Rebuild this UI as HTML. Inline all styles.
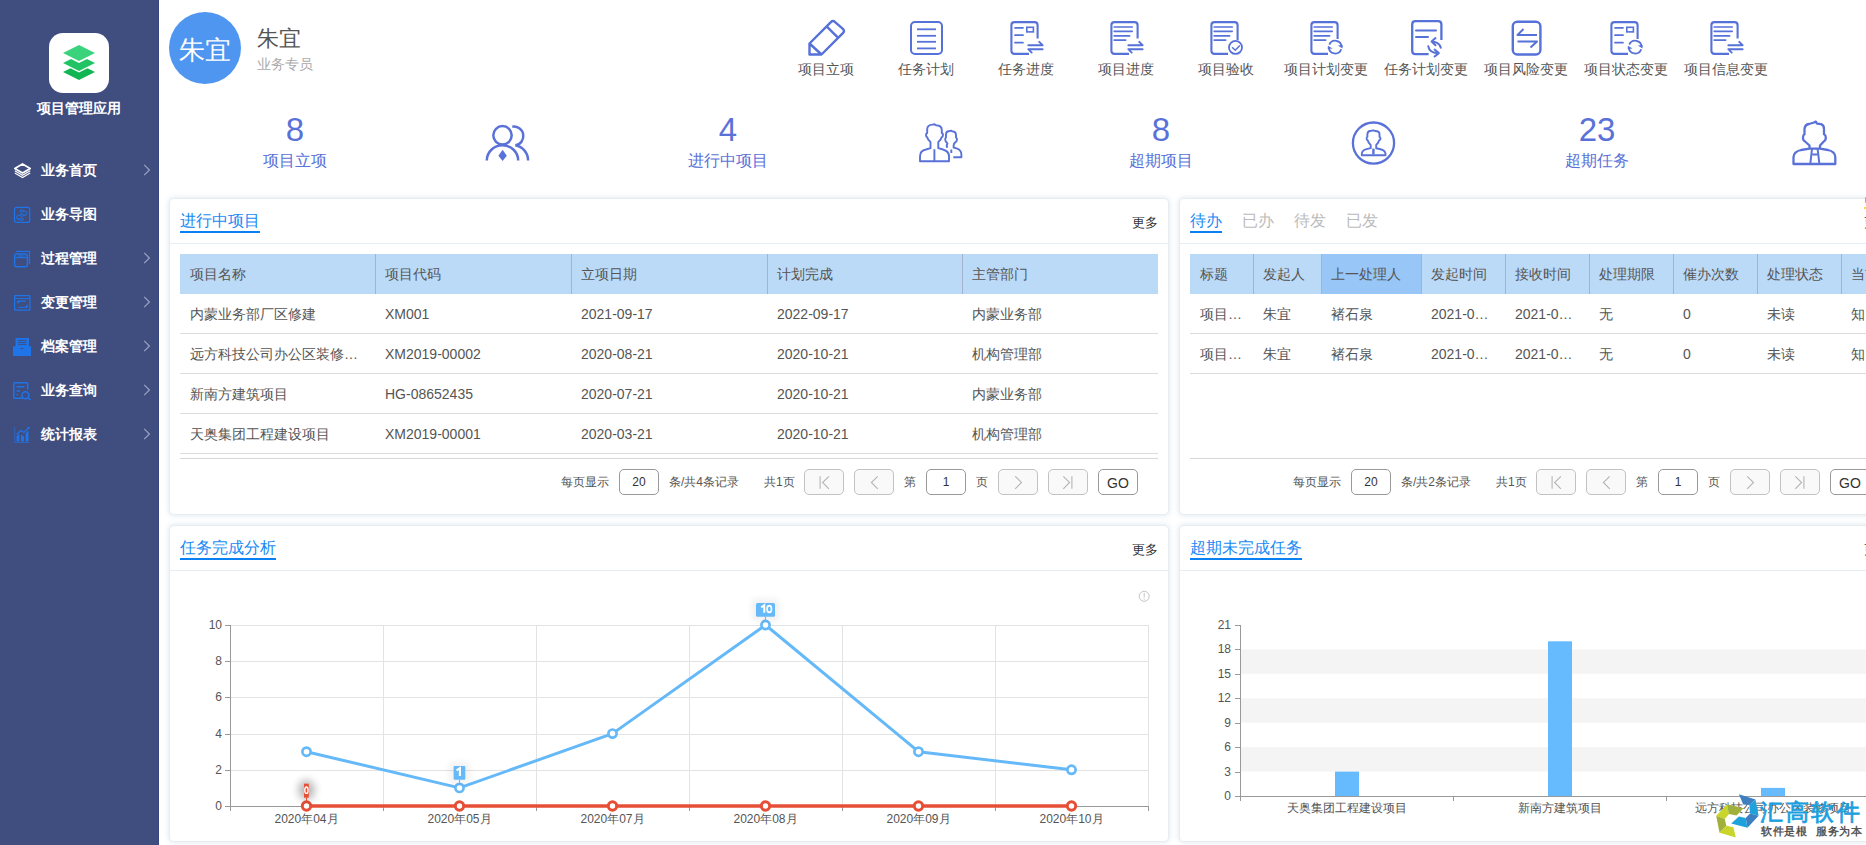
<!DOCTYPE html><html><head><meta charset="utf-8"><style>
*{box-sizing:border-box;margin:0;padding:0}
html,body{width:1866px;height:845px;overflow:hidden;background:#fff;font-family:"Liberation Sans", sans-serif;}
.abs{position:absolute}
.t{position:absolute;white-space:nowrap;line-height:1}
.side{position:absolute;left:0;top:0;width:159px;height:845px;background:#3f4d7f;border-right:1px solid #374681}
.mi{position:absolute;left:0;width:159px;height:44px}
.mi .lb{position:absolute;left:41px;top:15px;font-size:14px;color:#fff;line-height:14px;font-weight:bold}
.mi svg.ic{position:absolute;left:13px;top:13px}
.mi .ch{position:absolute;left:143px;top:16px}
.tool{position:absolute;top:0;width:100px;height:90px}
.tool svg{position:absolute;left:0;top:0}
.tool .lb{position:absolute;top:62px;left:0;width:100px;text-align:center;font-size:14px;color:#555;line-height:14px}
.panel{position:absolute;background:#fff;border-radius:4px;box-shadow:0 0 0 1px #e6edf1,0 0 5px 2px rgba(160,190,205,.28);overflow:hidden}
.ph{position:absolute;left:0;top:0;right:0;height:44px;border-bottom:1px solid #e6eef5}
.ptitle{position:absolute;left:10px;top:13px;font-size:16px;line-height:16px;color:#1e8cf0;padding-bottom:7px;border-bottom:2px solid #0a7cf0}
.more{position:absolute;right:10px;top:16px;font-size:13px;line-height:13px;color:#333}
table{border-collapse:collapse;table-layout:fixed}
th{background:#bbdaf8;height:40px;font-weight:normal;text-align:left;padding-left:10px;font-size:14px;color:#555;border-left:1px solid #9fb0cc;white-space:nowrap;overflow:hidden}
th:first-child{border-left:none}
td{height:40px;text-align:left;padding-left:10px;font-size:14px;color:#555;border-bottom:1px solid #dcdcdc;white-space:nowrap;overflow:hidden;text-overflow:ellipsis}
.pg{position:absolute;top:458px;height:56px;border-top:1px solid #d8d8d8}
.pt{position:absolute;top:18px;font-size:12px;line-height:12px;color:#555;white-space:nowrap}
.pin{position:absolute;top:11px;width:40px;height:26px;border:1px solid #999;border-radius:5px;text-align:center;font-size:12px;line-height:24px;color:#333}
.pb{position:absolute;top:11px;width:40px;height:26px;border:1px solid #c8c8c8;border-radius:5px;background:#f7f7f7}
.pb svg{position:absolute;left:0;top:0}
</style></head><body>

<div class="side">
<div class="abs" style="left:49px;top:33px;width:60px;height:60px;background:#fff;border-radius:14px"></div>
<svg class="abs" style="left:49px;top:33px" width="60" height="60" viewBox="0 0 60 60">
<polygon points="30,47 46,39 30,31 14,39" fill="#12b553"/>
<polygon points="30,39.5 46,31.5 30,23.5 14,31.5" fill="#fff"/>
<polygon points="30,38 46,30 30,22 14,30" fill="#22c365"/>
<polygon points="30,30 46,22 30,14 14,22" fill="#fff"/>
<polygon points="30,28 46,20 30,12 14,20" fill="#3ad27b"/>
</svg>
<div class="t" style="left:37px;top:101px;font-size:14px;line-height:14px;color:#fff;font-weight:bold;width:84px;text-align:center">项目管理应用</div>

<div class="mi" style="top:148px"><svg class="ic" width="20" height="20" viewBox="0 0 20 20"><path d="M9.5 2.9 L17.2 7.5 L9.5 12.1 L1.8 7.5 Z" fill="none" stroke="#fff" stroke-width="1.7" stroke-linejoin="round"/><path d="M1.8 9.7 L9.5 14.3 L17.2 9.7 M1.8 11.9 L9.5 16.5 L17.2 11.9" fill="none" stroke="#fff" stroke-width="1.15"/></svg><div class="lb">业务首页</div><svg class="ch" width="8" height="13" viewBox="0 0 8 13"><path d="M1.2 0.8 L6.4 6 L1.2 11.2" fill="none" stroke="#9aa3c2" stroke-width="1.2"/></svg></div>
<div class="mi" style="top:192px"><svg class="ic" width="20" height="20" viewBox="0 0 20 20"><rect x="1.5" y="2.4" width="15.2" height="15" rx="2" fill="none" stroke="#1f74e8" stroke-width="1.3"/><rect x="7" y="5" width="3.6" height="2" rx="1" fill="none" stroke="#1f74e8" stroke-width="1"/><rect x="7" y="9.2" width="3.6" height="2" rx="1" fill="none" stroke="#1f74e8" stroke-width="1"/><rect x="7" y="13.3" width="3.6" height="2" rx="1" fill="none" stroke="#1f74e8" stroke-width="1"/><path d="M10.8 6 Q14 6 14 8.1 Q14 10.2 11.5 10.2 M6.6 10.2 Q3.6 10.2 3.6 12.25 Q3.6 14.3 6 14.3" fill="none" stroke="#1f74e8" stroke-width="1"/><path d="M10.6 10.2 L12.4 9 L12.4 11.4 Z M6.9 14.3 L5.1 13.1 L5.1 15.5 Z" fill="#1f74e8"/></svg><div class="lb">业务导图</div></div>
<div class="mi" style="top:236px"><svg class="ic" width="20" height="20" viewBox="0 0 20 20"><path d="M3.2 2.4 H16.5 V15.2" fill="none" stroke="#1f74e8" stroke-width="1.3"/><rect x="1.6" y="5" width="12.8" height="12.8" rx="2" fill="none" stroke="#1f74e8" stroke-width="1.4"/><path d="M1.6 8.6 H14.4" stroke="#1f74e8" stroke-width="1.2"/><path d="M5 7 H10.5 M11.6 7 H12.6" stroke="#1f74e8" stroke-width="1"/></svg><div class="lb">过程管理</div><svg class="ch" width="8" height="13" viewBox="0 0 8 13"><path d="M1.2 0.8 L6.4 6 L1.2 11.2" fill="none" stroke="#9aa3c2" stroke-width="1.2"/></svg></div>
<div class="mi" style="top:280px"><svg class="ic" width="20" height="20" viewBox="0 0 20 20"><rect x="1.6" y="2.7" width="15.3" height="14.5" rx="0.5" fill="none" stroke="#1f74e8" stroke-width="1.3"/><path d="M1.6 5.6 H16.9" stroke="#1f74e8" stroke-width="1"/><path d="M12.7 8.1 H5.2 M5.2 14.3 H14" fill="none" stroke="#1f74e8" stroke-width="1.1"/><path d="M3.6 8.1 H7.2 L5 11 Z M12 14.3 H15.6 L14 11.2 Z" fill="#1f74e8"/></svg><div class="lb">变更管理</div><svg class="ch" width="8" height="13" viewBox="0 0 8 13"><path d="M1.2 0.8 L6.4 6 L1.2 11.2" fill="none" stroke="#9aa3c2" stroke-width="1.2"/></svg></div>
<div class="mi" style="top:324px"><svg class="ic" width="20" height="20" viewBox="0 0 20 20"><rect x="2.5" y="1" width="13.5" height="10" fill="#1f74e8"/><path d="M5 3.4 H13.5 M5 5.4 H13.5 M5 7.4 H13.5" stroke="#3f4d7f" stroke-width="0.9"/><path d="M0 9.2 H5.2 L9 12.6 L12.8 9.2 H18 V18.9 H0 Z" fill="#1f74e8"/></svg><div class="lb">档案管理</div><svg class="ch" width="8" height="13" viewBox="0 0 8 13"><path d="M1.2 0.8 L6.4 6 L1.2 11.2" fill="none" stroke="#9aa3c2" stroke-width="1.2"/></svg></div>
<div class="mi" style="top:368px"><svg class="ic" width="20" height="20" viewBox="0 0 20 20"><path d="M9.5 17.2 H1.8 Q0.8 17.2 0.8 16.2 V2.7 Q0.8 1.7 1.8 1.7 H13.7 Q14.7 1.7 14.7 2.7 V8.5" fill="none" stroke="#1f74e8" stroke-width="1.5"/><path d="M3.5 5.7 H11.5 M3.5 9.9 H7 M3.5 13.5 H5" stroke="#1f74e8" stroke-width="1.5"/><circle cx="12.4" cy="14.2" r="3.5" fill="none" stroke="#1f74e8" stroke-width="1.5"/><path d="M14.9 16.7 L17.6 19.2" stroke="#1f74e8" stroke-width="1.6"/></svg><div class="lb">业务查询</div><svg class="ch" width="8" height="13" viewBox="0 0 8 13"><path d="M1.2 0.8 L6.4 6 L1.2 11.2" fill="none" stroke="#9aa3c2" stroke-width="1.2"/></svg></div>
<div class="mi" style="top:412px"><svg class="ic" width="20" height="20" viewBox="0 0 20 20"><path d="M1.8 2 V17.5 H16.5" fill="none" stroke="#1f74e8" stroke-width="0.8" opacity="0.8"/><path d="M3.5 16.5 V11 L6.5 9 V16.5 Z M8 16.5 V9.5 L11 11.5 V16.5 Z M12.5 16.5 V8.5 L15.5 5.5 V16.5 Z" fill="#1f74e8"/><path d="M3.5 9.5 L8 5.5 L11 7.5 L15.5 3" fill="none" stroke="#1f74e8" stroke-width="1.2"/><circle cx="15.7" cy="2.9" r="1.2" fill="#1f74e8"/></svg><div class="lb">统计报表</div><svg class="ch" width="8" height="13" viewBox="0 0 8 13"><path d="M1.2 0.8 L6.4 6 L1.2 11.2" fill="none" stroke="#9aa3c2" stroke-width="1.2"/></svg></div>
</div>
<div class="abs" style="left:169px;top:12px;width:72px;height:72px;border-radius:50%;background:#4f96f0"></div>
<div class="t" style="left:179px;top:37px;width:52px;text-align:center;font-size:26px;line-height:26px;color:#fff">朱宜</div>
<div class="t" style="left:257px;top:28px;font-size:22px;line-height:22px;color:#555">朱宜</div>
<div class="t" style="left:257px;top:57px;font-size:14px;line-height:14px;color:#aaa">业务专员</div>

<div class="tool" style="left:776px"><svg width="100" height="60" viewBox="0 0 100 60"><path d="M45.5 54.5 H33.5 V43.5 L54.9 22.1 Q57 20 59.1 22.1 L66.9 28.9 Q69 31 66.9 33.1 Z M50.6 26.4 L62.2 37.8 M33.5 43.5 L45.5 54.5" fill="none" stroke="#5671d8" stroke-width="2.4" stroke-linejoin="round"/></svg><div class="lb">项目立项</div></div>
<div class="tool" style="left:876px"><svg width="100" height="60" viewBox="0 0 100 60"><rect x="35" y="22" width="31" height="32" rx="4" fill="none" stroke="#5671d8" stroke-width="2"/><path d="M41 29.3 H60" stroke="#5671d8" stroke-width="1.8"/><path d="M41 35.8 H60" stroke="#5671d8" stroke-width="1.8"/><path d="M41 41.8 H60" stroke="#5671d8" stroke-width="1.8"/><path d="M41 48.4 H60" stroke="#5671d8" stroke-width="1.8"/></svg><div class="lb">任务计划</div></div>
<div class="tool" style="left:976px"><svg width="100" height="60" viewBox="0 0 100 60"><path d="M61.6 38.5 V25.2 Q61.6 22.1 58.5 22.1 H38.5 Q35.4 22.1 35.4 25.2 V50.8 Q35.4 53.9 38.5 53.9 H53.0" fill="none" stroke="#5671d8" stroke-width="2.1"/><path d="M39 27.8 H47" stroke="#5671d8" stroke-width="1.7" stroke-linecap="round"/><path d="M39 35.2 H47" stroke="#5671d8" stroke-width="1.7" stroke-linecap="round"/><path d="M39 42.7 H47" stroke="#5671d8" stroke-width="1.7" stroke-linecap="round"/><rect x="50.8" y="27.3" width="6.6" height="4.6" fill="none" stroke="#5671d8" stroke-width="1.6"/><path d="M52.3 45.2 H66.6 L63.2 41.8 M66.6 49.2 H52.3 L55.7 52.6" fill="none" stroke="#5671d8" stroke-width="1.9" stroke-linecap="round" stroke-linejoin="round"/></svg><div class="lb">任务进度</div></div>
<div class="tool" style="left:1076px"><svg width="100" height="60" viewBox="0 0 100 60"><path d="M61.6 38.5 V25.2 Q61.6 22.1 58.5 22.1 H38.5 Q35.4 22.1 35.4 25.2 V50.8 Q35.4 53.9 38.5 53.9 H53.0" fill="none" stroke="#5671d8" stroke-width="2.1"/><path d="M38.2 27.0 H56.2" stroke="#5671d8" stroke-width="1.7" stroke-linecap="round"/><path d="M38.2 31.3 H56.2" stroke="#5671d8" stroke-width="1.7" stroke-linecap="round"/><path d="M38.2 35.8 H53.6" stroke="#5671d8" stroke-width="1.7" stroke-linecap="round"/><path d="M38.2 40.1 H49.7" stroke="#5671d8" stroke-width="1.7" stroke-linecap="round"/><path d="M52.3 45.2 H66.6 L63.2 41.8 M66.6 49.2 H52.3 L55.7 52.6" fill="none" stroke="#5671d8" stroke-width="1.9" stroke-linecap="round" stroke-linejoin="round"/></svg><div class="lb">项目进度</div></div>
<div class="tool" style="left:1176px"><svg width="100" height="60" viewBox="0 0 100 60"><path d="M61.6 40.0 V25.2 Q61.6 22.1 58.5 22.1 H38.5 Q35.4 22.1 35.4 25.2 V50.8 Q35.4 53.9 38.5 53.9 H52.0" fill="none" stroke="#5671d8" stroke-width="2.1"/><path d="M38.2 27.0 H56.2" stroke="#5671d8" stroke-width="1.7" stroke-linecap="round"/><path d="M38.2 31.3 H56.2" stroke="#5671d8" stroke-width="1.7" stroke-linecap="round"/><path d="M38.2 35.8 H53.6" stroke="#5671d8" stroke-width="1.7" stroke-linecap="round"/><path d="M38.2 40.1 H49.7" stroke="#5671d8" stroke-width="1.7" stroke-linecap="round"/><circle cx="59.5" cy="47.4" r="6.5" fill="#fff" stroke="#5671d8" stroke-width="1.8"/><path d="M56.1 47.2 L59.3 50.2 L63.8 45.4" fill="none" stroke="#5671d8" stroke-width="1.5"/></svg><div class="lb">项目验收</div></div>
<div class="tool" style="left:1276px"><svg width="100" height="60" viewBox="0 0 100 60"><path d="M61.6 39.0 V25.2 Q61.6 22.1 58.5 22.1 H38.5 Q35.4 22.1 35.4 25.2 V50.8 Q35.4 53.9 38.5 53.9 H52.0" fill="none" stroke="#5671d8" stroke-width="2.1"/><path d="M38.2 27.0 H56.2" stroke="#5671d8" stroke-width="1.7" stroke-linecap="round"/><path d="M38.2 31.3 H56.2" stroke="#5671d8" stroke-width="1.7" stroke-linecap="round"/><path d="M38.2 35.8 H53.6" stroke="#5671d8" stroke-width="1.7" stroke-linecap="round"/><path d="M38.2 40.1 H49.7" stroke="#5671d8" stroke-width="1.7" stroke-linecap="round"/><path d="M53.31 44.60 A6.4 6.4 0 0 1 65.60 46.88 M65.21 49.29 A6.4 6.4 0 0 1 52.80 47.32" fill="none" stroke="#5671d8" stroke-width="1.8"/><polygon points="61.80,45.60 66.70,45.10 66.50,48.40" fill="#5671d8"/><polygon points="56.60,48.60 51.70,49.10 51.90,45.80" fill="#5671d8"/></svg><div class="lb">项目计划变更</div></div>
<div class="tool" style="left:1376px"><svg width="100" height="60" viewBox="0 0 100 60"><path d="M65.4 40 V24.5 Q65.4 21.2 62 21.2 H39.5 Q36.2 21.2 36.2 24.5 V50.8 Q36.2 54.2 39.5 54.2 H52.6" fill="none" stroke="#5671d8" stroke-width="2.3"/><path d="M40 30.4 H60 M40 36.9 H52" stroke="#5671d8" stroke-width="2" stroke-linecap="round"/><path d="M55.8 41.5 Q63.3 42 64.8 47.8 M52.3 46.3 Q53.3 53 62.8 53.1 M59.5 38.1 L55.6 41.6 L59.5 45.3 M58.6 49.6 L62.8 53.1 L58.6 56.5" fill="none" stroke="#5671d8" stroke-width="2" stroke-linejoin="round" stroke-linecap="round"/></svg><div class="lb">任务计划变更</div></div>
<div class="tool" style="left:1476px"><svg width="100" height="60" viewBox="0 0 100 60"><rect x="36.8" y="21.8" width="27.6" height="32.7" rx="4.5" fill="none" stroke="#5671d8" stroke-width="2.4"/><path d="M61 35 H41.5 L47.5 29 M41.5 41.4 H61 L54.5 47.5" fill="none" stroke="#5671d8" stroke-width="2" stroke-linejoin="round"/></svg><div class="lb">项目风险变更</div></div>
<div class="tool" style="left:1576px"><svg width="100" height="60" viewBox="0 0 100 60"><path d="M61.6 39.0 V25.2 Q61.6 22.1 58.5 22.1 H38.5 Q35.4 22.1 35.4 25.2 V50.8 Q35.4 53.9 38.5 53.9 H52.0" fill="none" stroke="#5671d8" stroke-width="2.1"/><path d="M39 27.8 H47" stroke="#5671d8" stroke-width="1.7" stroke-linecap="round"/><path d="M39 35.2 H47" stroke="#5671d8" stroke-width="1.7" stroke-linecap="round"/><path d="M39 42.7 H47" stroke="#5671d8" stroke-width="1.7" stroke-linecap="round"/><rect x="50.8" y="27.3" width="6.6" height="4.6" fill="none" stroke="#5671d8" stroke-width="1.6"/><path d="M53.31 44.60 A6.4 6.4 0 0 1 65.60 46.88 M65.21 49.29 A6.4 6.4 0 0 1 52.80 47.32" fill="none" stroke="#5671d8" stroke-width="1.8"/><polygon points="61.80,45.60 66.70,45.10 66.50,48.40" fill="#5671d8"/><polygon points="56.60,48.60 51.70,49.10 51.90,45.80" fill="#5671d8"/></svg><div class="lb">项目状态变更</div></div>
<div class="tool" style="left:1676px"><svg width="100" height="60" viewBox="0 0 100 60"><path d="M61.6 38.5 V25.2 Q61.6 22.1 58.5 22.1 H38.5 Q35.4 22.1 35.4 25.2 V50.8 Q35.4 53.9 38.5 53.9 H53.0" fill="none" stroke="#5671d8" stroke-width="2.1"/><path d="M38.2 27.0 H56.2" stroke="#5671d8" stroke-width="1.7" stroke-linecap="round"/><path d="M38.2 31.3 H56.2" stroke="#5671d8" stroke-width="1.7" stroke-linecap="round"/><path d="M38.2 35.8 H53.6" stroke="#5671d8" stroke-width="1.7" stroke-linecap="round"/><path d="M38.2 40.1 H49.7" stroke="#5671d8" stroke-width="1.7" stroke-linecap="round"/><path d="M52.3 45.2 H66.6 L63.2 41.8 M66.6 49.2 H52.3 L55.7 52.6" fill="none" stroke="#5671d8" stroke-width="1.9" stroke-linecap="round" stroke-linejoin="round"/></svg><div class="lb">项目信息变更</div></div>
<div class="t" style="left:235px;top:113px;width:120px;text-align:center;font-size:33px;line-height:33px;color:#5a72d8">8</div>
<div class="t" style="left:225px;top:153px;width:140px;text-align:center;font-size:16px;line-height:16px;color:#5a72d8">项目立项</div>
<div class="t" style="left:668px;top:113px;width:120px;text-align:center;font-size:33px;line-height:33px;color:#5a72d8">4</div>
<div class="t" style="left:658px;top:153px;width:140px;text-align:center;font-size:16px;line-height:16px;color:#5a72d8">进行中项目</div>
<div class="t" style="left:1101px;top:113px;width:120px;text-align:center;font-size:33px;line-height:33px;color:#5a72d8">8</div>
<div class="t" style="left:1091px;top:153px;width:140px;text-align:center;font-size:16px;line-height:16px;color:#5a72d8">超期项目</div>
<div class="t" style="left:1537px;top:113px;width:120px;text-align:center;font-size:33px;line-height:33px;color:#5a72d8">23</div>
<div class="t" style="left:1527px;top:153px;width:140px;text-align:center;font-size:16px;line-height:16px;color:#5a72d8">超期任务</div>
<svg class="abs" style="left:480px;top:118px" width="56" height="48" viewBox="480 118 56 48">
<circle cx="502.5" cy="135.3" r="9.2" fill="none" stroke="#5a72d8" stroke-width="2.5"/>
<path d="M486.8 160.5 A15.7 15.2 0 0 1 518.2 160.5" fill="none" stroke="#5a72d8" stroke-width="2.5"/>
<path d="M502.6 149.8 L506.8 155.8 L502.6 160.9 L498.4 155.8 Z" fill="#5a72d8"/>
<path d="M512.3 126.7 A9.4 9.4 0 0 1 515.5 145.3" fill="none" stroke="#5a72d8" stroke-width="2.5"/>
<path d="M515.5 145.3 A15.5 15.5 0 0 1 528.1 160.5" fill="none" stroke="#5a72d8" stroke-width="2.5"/>
</svg>
<svg class="abs" style="left:914px;top:118px" width="54" height="48" viewBox="914 118 54 48">
<path d="M920 161.2 V156.5 Q920 150.5 926 149.5 L930.5 148.2 V142 Q927.8 140 927.3 137.5 Q926 137 926 135 Q926 133.5 927.2 133 V129 Q927.5 124.8 932.5 124.6 L934.5 124.2 L936 125.2 Q941.8 125.5 941.8 130 V133 Q943 133.5 943 135 Q943 137 941.5 137.5 Q941 140 938.3 142 V148.2 L943 149.5 Q949 151 949 156.5 V161.2 Z M934.4 149.2 V161" fill="none" stroke="#5a72d8" stroke-width="1.9" stroke-linejoin="round"/>
<path d="M947.4 147.8 Q946 145.5 947.5 143.5 Q945.2 141.5 945.2 139.5 Q945.2 138 946 137.5 V134.5 Q946 131 950 131 L951 130.6 L952 131.2 Q956 131.5 956 135 V137.5 Q957 138 957 139.5 Q957 141.5 955 142.5 Q953.6 144 953.6 145.5 V147.5 L956.5 148.3 Q961.4 149.8 961.4 154.5 V157.3 H953.3 M951.3 149.5 V153" fill="none" stroke="#5a72d8" stroke-width="1.9" stroke-linejoin="round"/>
</svg>
<svg class="abs" style="left:1348px;top:118px" width="52" height="50" viewBox="1348 118 52 50">
<circle cx="1373.5" cy="143.1" r="20.6" fill="none" stroke="#5a72d8" stroke-width="2.3"/>
<path d="M1361.8 155.3 V153.5 Q1362.5 150.2 1366.5 149.2 L1370.7 148.2 V145 Q1368.3 143 1367.8 140.5 Q1366.6 140 1366.6 138.5 Q1366.6 137.3 1367.4 136.8 V134 Q1367.5 131 1371 130.8 L1373.8 130.4 L1375 131 Q1379.5 131.2 1379.5 134 V136.8 Q1380.5 137.3 1380.5 138.5 Q1380.5 140 1379 140.5 Q1378.5 143 1376.2 145 V148.2 L1380.5 149.2 Q1384.8 150.2 1385.5 153.5 V155.3 Z" fill="none" stroke="#5a72d8" stroke-width="1.9" stroke-linejoin="round"/>
<path d="M1373.4 148.6 V154.5" stroke="#5a72d8" stroke-width="2.4"/>
</svg>
<svg class="abs" style="left:1788px;top:116px" width="54" height="52" viewBox="1788 116 54 52">
<path d="M1793.5 164 V157 Q1794 151.5 1801 150 L1809.5 148.6 V145.5 L1804.5 141 Q1803 140.5 1803 137.5 Q1803 135 1804.5 134.3 V129 Q1805 124.5 1809 124 L1814 122.5 L1815.8 121.6 L1817 123.6 L1821 124.2 Q1824 125 1824 129 V134.3 Q1825.8 135 1825.8 137.5 Q1825.8 140.5 1824 141.2 L1820 145.5 V148.6 L1828 150 Q1835 151.5 1835.3 157 V164 Z M1809.5 148.6 H1820" fill="none" stroke="#5a72d8" stroke-width="2.3" stroke-linejoin="round"/>
<path d="M1812 148.8 L1810.3 164 M1817.6 148.8 L1819.4 164 M1812.5 154.5 H1817.2" fill="none" stroke="#5a72d8" stroke-width="2" stroke-linejoin="round"/>
</svg>
<div class="panel" style="left:170px;top:199px;width:998px;height:315px"></div>
<div class="panel" style="left:1180px;top:199px;width:720px;height:315px"></div>
<div class="panel" style="left:170px;top:526px;width:998px;height:315px"></div>
<div class="panel" style="left:1180px;top:526px;width:720px;height:315px"></div>
<div class="abs" style="left:170px;top:243px;width:998px;height:1px;background:#e6eef5"></div>
<div class="abs" style="left:1180px;top:243px;width:720px;height:1px;background:#e6eef5"></div>
<div class="abs" style="left:170px;top:570px;width:998px;height:1px;background:#e6eef5"></div>
<div class="abs" style="left:1180px;top:570px;width:720px;height:1px;background:#e6eef5"></div>
<div class="t" style="left:180px;top:213px;font-size:16px;line-height:16px;color:#1a8af5;padding-bottom:0">进行中项目</div>
<div class="abs" style="left:180px;top:231px;width:80px;height:2px;background:#0a80f5"></div>
<div class="t" style="left:1132px;top:216px;font-size:13px;line-height:13px;color:#333">更多</div>
<div class="t" style="left:1190px;top:213px;font-size:16px;line-height:16px;color:#1a8af5;padding-bottom:0">待办</div>
<div class="abs" style="left:1190px;top:231px;width:32px;height:2px;background:#0a80f5"></div>
<div class="t" style="left:1242px;top:213px;font-size:16px;line-height:16px;color:#bbb">已办</div>
<div class="t" style="left:1294px;top:213px;font-size:16px;line-height:16px;color:#bbb">待发</div>
<div class="t" style="left:1346px;top:213px;font-size:16px;line-height:16px;color:#bbb">已发</div>
<div class="t" style="left:1864px;top:216px;font-size:13px;line-height:13px;color:#333">更多</div>
<div class="abs" style="left:1865px;top:197px;width:2px;height:6px;background:#3ddbb5;border-radius:1px"></div>
<div class="abs" style="left:1864px;top:207px;width:3px;height:2px;background:#ffd83a"></div>
<div class="t" style="left:180px;top:540px;font-size:16px;line-height:16px;color:#1a8af5;padding-bottom:0">任务完成分析</div>
<div class="abs" style="left:180px;top:558px;width:96px;height:2px;background:#0a80f5"></div>
<div class="t" style="left:1132px;top:543px;font-size:13px;line-height:13px;color:#333">更多</div>
<div class="t" style="left:1190px;top:540px;font-size:16px;line-height:16px;color:#1a8af5;padding-bottom:0">超期未完成任务</div>
<div class="abs" style="left:1190px;top:558px;width:112px;height:2px;background:#0a80f5"></div>
<div class="t" style="left:1864px;top:543px;font-size:13px;line-height:13px;color:#333">更多</div>
<div class="abs" style="left:180px;top:254px;width:978px;height:40px;background:#bbdaf8"></div>
<div class="abs" style="left:375px;top:254px;width:1px;height:40px;background:#a3b3cf"></div>
<div class="abs" style="left:571px;top:254px;width:1px;height:40px;background:#a3b3cf"></div>
<div class="abs" style="left:767px;top:254px;width:1px;height:40px;background:#a3b3cf"></div>
<div class="abs" style="left:962px;top:254px;width:1px;height:40px;background:#a3b3cf"></div>
<div class="t" style="left:190px;top:267px;font-size:14px;line-height:14px;color:#555">项目名称</div>
<div class="t" style="left:385px;top:267px;font-size:14px;line-height:14px;color:#555">项目代码</div>
<div class="t" style="left:581px;top:267px;font-size:14px;line-height:14px;color:#555">立项日期</div>
<div class="t" style="left:777px;top:267px;font-size:14px;line-height:14px;color:#555">计划完成</div>
<div class="t" style="left:972px;top:267px;font-size:14px;line-height:14px;color:#555">主管部门</div>
<div class="abs" style="left:180px;top:333px;width:978px;height:1px;background:#dcdcdc"></div>
<div class="t" style="left:190px;top:307px;font-size:14px;line-height:14px;color:#555">内蒙业务部厂区修建</div>
<div class="t" style="left:385px;top:307px;font-size:14px;line-height:14px;color:#555">XM001</div>
<div class="t" style="left:581px;top:307px;font-size:14px;line-height:14px;color:#555">2021-09-17</div>
<div class="t" style="left:777px;top:307px;font-size:14px;line-height:14px;color:#555">2022-09-17</div>
<div class="t" style="left:972px;top:307px;font-size:14px;line-height:14px;color:#555">内蒙业务部</div>
<div class="abs" style="left:180px;top:373px;width:978px;height:1px;background:#dcdcdc"></div>
<div class="t" style="left:190px;top:347px;font-size:14px;line-height:14px;color:#555">远方科技公司办公区装修…</div>
<div class="t" style="left:385px;top:347px;font-size:14px;line-height:14px;color:#555">XM2019-00002</div>
<div class="t" style="left:581px;top:347px;font-size:14px;line-height:14px;color:#555">2020-08-21</div>
<div class="t" style="left:777px;top:347px;font-size:14px;line-height:14px;color:#555">2020-10-21</div>
<div class="t" style="left:972px;top:347px;font-size:14px;line-height:14px;color:#555">机构管理部</div>
<div class="abs" style="left:180px;top:413px;width:978px;height:1px;background:#dcdcdc"></div>
<div class="t" style="left:190px;top:387px;font-size:14px;line-height:14px;color:#555">新南方建筑项目</div>
<div class="t" style="left:385px;top:387px;font-size:14px;line-height:14px;color:#555">HG-08652435</div>
<div class="t" style="left:581px;top:387px;font-size:14px;line-height:14px;color:#555">2020-07-21</div>
<div class="t" style="left:777px;top:387px;font-size:14px;line-height:14px;color:#555">2020-10-21</div>
<div class="t" style="left:972px;top:387px;font-size:14px;line-height:14px;color:#555">内蒙业务部</div>
<div class="abs" style="left:180px;top:453px;width:978px;height:1px;background:#dcdcdc"></div>
<div class="t" style="left:190px;top:427px;font-size:14px;line-height:14px;color:#555">天奥集团工程建设项目</div>
<div class="t" style="left:385px;top:427px;font-size:14px;line-height:14px;color:#555">XM2019-00001</div>
<div class="t" style="left:581px;top:427px;font-size:14px;line-height:14px;color:#555">2020-03-21</div>
<div class="t" style="left:777px;top:427px;font-size:14px;line-height:14px;color:#555">2020-10-21</div>
<div class="t" style="left:972px;top:427px;font-size:14px;line-height:14px;color:#555">机构管理部</div>
<div class="abs" style="left:1190px;top:254px;width:735px;height:40px;background:#bbdaf8"></div>
<div class="abs" style="left:1321px;top:254px;width:100px;height:40px;background:#98c6f6"></div>
<div class="abs" style="left:1253px;top:254px;width:1px;height:40px;background:#a3b3cf"></div>
<div class="abs" style="left:1321px;top:254px;width:1px;height:40px;background:#a3b3cf"></div>
<div class="abs" style="left:1421px;top:254px;width:1px;height:40px;background:#a3b3cf"></div>
<div class="abs" style="left:1505px;top:254px;width:1px;height:40px;background:#a3b3cf"></div>
<div class="abs" style="left:1589px;top:254px;width:1px;height:40px;background:#a3b3cf"></div>
<div class="abs" style="left:1673px;top:254px;width:1px;height:40px;background:#a3b3cf"></div>
<div class="abs" style="left:1757px;top:254px;width:1px;height:40px;background:#a3b3cf"></div>
<div class="abs" style="left:1841px;top:254px;width:1px;height:40px;background:#a3b3cf"></div>
<div class="t" style="left:1200px;top:267px;font-size:14px;line-height:14px;color:#555">标题</div>
<div class="t" style="left:1263px;top:267px;font-size:14px;line-height:14px;color:#555">发起人</div>
<div class="t" style="left:1331px;top:267px;font-size:14px;line-height:14px;color:#555">上一处理人</div>
<div class="t" style="left:1431px;top:267px;font-size:14px;line-height:14px;color:#555">发起时间</div>
<div class="t" style="left:1515px;top:267px;font-size:14px;line-height:14px;color:#555">接收时间</div>
<div class="t" style="left:1599px;top:267px;font-size:14px;line-height:14px;color:#555">处理期限</div>
<div class="t" style="left:1683px;top:267px;font-size:14px;line-height:14px;color:#555">催办次数</div>
<div class="t" style="left:1767px;top:267px;font-size:14px;line-height:14px;color:#555">处理状态</div>
<div class="t" style="left:1851px;top:267px;font-size:14px;line-height:14px;color:#555">当前处理人</div>
<div class="abs" style="left:1190px;top:333px;width:735px;height:1px;background:#dcdcdc"></div>
<div class="t" style="left:1200px;top:307px;font-size:14px;line-height:14px;color:#555">项目…</div>
<div class="t" style="left:1263px;top:307px;font-size:14px;line-height:14px;color:#555">朱宜</div>
<div class="t" style="left:1331px;top:307px;font-size:14px;line-height:14px;color:#555">褚石泉</div>
<div class="t" style="left:1431px;top:307px;font-size:14px;line-height:14px;color:#555">2021-0…</div>
<div class="t" style="left:1515px;top:307px;font-size:14px;line-height:14px;color:#555">2021-0…</div>
<div class="t" style="left:1599px;top:307px;font-size:14px;line-height:14px;color:#555">无</div>
<div class="t" style="left:1683px;top:307px;font-size:14px;line-height:14px;color:#555">0</div>
<div class="t" style="left:1767px;top:307px;font-size:14px;line-height:14px;color:#555">未读</div>
<div class="t" style="left:1851px;top:307px;font-size:14px;line-height:14px;color:#555">知</div>
<div class="abs" style="left:1190px;top:373px;width:735px;height:1px;background:#dcdcdc"></div>
<div class="t" style="left:1200px;top:347px;font-size:14px;line-height:14px;color:#555">项目…</div>
<div class="t" style="left:1263px;top:347px;font-size:14px;line-height:14px;color:#555">朱宜</div>
<div class="t" style="left:1331px;top:347px;font-size:14px;line-height:14px;color:#555">褚石泉</div>
<div class="t" style="left:1431px;top:347px;font-size:14px;line-height:14px;color:#555">2021-0…</div>
<div class="t" style="left:1515px;top:347px;font-size:14px;line-height:14px;color:#555">2021-0…</div>
<div class="t" style="left:1599px;top:347px;font-size:14px;line-height:14px;color:#555">无</div>
<div class="t" style="left:1683px;top:347px;font-size:14px;line-height:14px;color:#555">0</div>
<div class="t" style="left:1767px;top:347px;font-size:14px;line-height:14px;color:#555">未读</div>
<div class="t" style="left:1851px;top:347px;font-size:14px;line-height:14px;color:#555">知</div>
<div class="abs" style="left:180px;top:458px;width:978px;height:1px;background:#d8d8d8"></div>
<div class="t" style="left:561px;top:476px;font-size:12px;line-height:12px;color:#555">每页显示</div>
<div class="abs" style="left:619px;top:469px;width:40px;height:26px;border:1px solid #999;border-radius:5px;text-align:center;font-size:12px;line-height:24px;color:#333">20</div>
<div class="t" style="left:669px;top:476px;font-size:12px;line-height:12px;color:#555">条/共4条记录</div>
<div class="t" style="left:764px;top:476px;font-size:12px;line-height:12px;color:#555">共1页</div>
<div class="abs" style="left:804px;top:469px;width:40px;height:26px;border:1px solid #c2c2c2;border-radius:5px;background:#f9f9f9"><svg class="abs" style="left:0;top:0" width="38" height="24" viewBox="0 0 38 24"><path d="M15.1 6.3 V18.8 M23.9 6.3 L17.6 12.5 L23.9 18.8" fill="none" stroke="#b4b4b4" stroke-width="1.1"/></svg></div>
<div class="abs" style="left:854px;top:469px;width:40px;height:26px;border:1px solid #c2c2c2;border-radius:5px;background:#f9f9f9"><svg class="abs" style="left:0;top:0" width="38" height="24" viewBox="0 0 38 24"><path d="M22.7 6.3 L16.4 12.5 L22.7 18.8" fill="none" stroke="#b4b4b4" stroke-width="1.1"/></svg></div>
<div class="t" style="left:904px;top:476px;font-size:12px;line-height:12px;color:#555">第</div>
<div class="abs" style="left:926px;top:469px;width:40px;height:26px;border:1px solid #999;border-radius:5px;text-align:center;font-size:12px;line-height:24px;color:#333">1</div>
<div class="t" style="left:976px;top:476px;font-size:12px;line-height:12px;color:#555">页</div>
<div class="abs" style="left:998px;top:469px;width:40px;height:26px;border:1px solid #c2c2c2;border-radius:5px;background:#f9f9f9"><svg class="abs" style="left:0;top:0" width="38" height="24" viewBox="0 0 38 24"><path d="M16.2 6.3 L22.5 12.5 L16.2 18.8" fill="none" stroke="#b4b4b4" stroke-width="1.1"/></svg></div>
<div class="abs" style="left:1048px;top:469px;width:40px;height:26px;border:1px solid #c2c2c2;border-radius:5px;background:#f9f9f9"><svg class="abs" style="left:0;top:0" width="38" height="24" viewBox="0 0 38 24"><path d="M14.3 6.3 L20.6 12.5 L14.3 18.8 M22.9 6.3 V18.8" fill="none" stroke="#b4b4b4" stroke-width="1.1"/></svg></div>
<div class="abs" style="left:1098px;top:469px;width:40px;height:26px;border:1px solid #999;border-radius:5px;text-align:center;font-size:14px;line-height:26px;color:#333">GO</div>
<div class="abs" style="left:1190px;top:458px;width:978px;height:1px;background:#d8d8d8"></div>
<div class="t" style="left:1293px;top:476px;font-size:12px;line-height:12px;color:#555">每页显示</div>
<div class="abs" style="left:1351px;top:469px;width:40px;height:26px;border:1px solid #999;border-radius:5px;text-align:center;font-size:12px;line-height:24px;color:#333">20</div>
<div class="t" style="left:1401px;top:476px;font-size:12px;line-height:12px;color:#555">条/共2条记录</div>
<div class="t" style="left:1496px;top:476px;font-size:12px;line-height:12px;color:#555">共1页</div>
<div class="abs" style="left:1536px;top:469px;width:40px;height:26px;border:1px solid #c2c2c2;border-radius:5px;background:#f9f9f9"><svg class="abs" style="left:0;top:0" width="38" height="24" viewBox="0 0 38 24"><path d="M15.1 6.3 V18.8 M23.9 6.3 L17.6 12.5 L23.9 18.8" fill="none" stroke="#b4b4b4" stroke-width="1.1"/></svg></div>
<div class="abs" style="left:1586px;top:469px;width:40px;height:26px;border:1px solid #c2c2c2;border-radius:5px;background:#f9f9f9"><svg class="abs" style="left:0;top:0" width="38" height="24" viewBox="0 0 38 24"><path d="M22.7 6.3 L16.4 12.5 L22.7 18.8" fill="none" stroke="#b4b4b4" stroke-width="1.1"/></svg></div>
<div class="t" style="left:1636px;top:476px;font-size:12px;line-height:12px;color:#555">第</div>
<div class="abs" style="left:1658px;top:469px;width:40px;height:26px;border:1px solid #999;border-radius:5px;text-align:center;font-size:12px;line-height:24px;color:#333">1</div>
<div class="t" style="left:1708px;top:476px;font-size:12px;line-height:12px;color:#555">页</div>
<div class="abs" style="left:1730px;top:469px;width:40px;height:26px;border:1px solid #c2c2c2;border-radius:5px;background:#f9f9f9"><svg class="abs" style="left:0;top:0" width="38" height="24" viewBox="0 0 38 24"><path d="M16.2 6.3 L22.5 12.5 L16.2 18.8" fill="none" stroke="#b4b4b4" stroke-width="1.1"/></svg></div>
<div class="abs" style="left:1780px;top:469px;width:40px;height:26px;border:1px solid #c2c2c2;border-radius:5px;background:#f9f9f9"><svg class="abs" style="left:0;top:0" width="38" height="24" viewBox="0 0 38 24"><path d="M14.3 6.3 L20.6 12.5 L14.3 18.8 M22.9 6.3 V18.8" fill="none" stroke="#b4b4b4" stroke-width="1.1"/></svg></div>
<div class="abs" style="left:1830px;top:469px;width:40px;height:26px;border:1px solid #999;border-radius:5px;text-align:center;font-size:14px;line-height:26px;color:#333">GO</div>
<svg class="abs" style="left:0;top:0" width="1866" height="845" viewBox="0 0 1866 845"><path d="M230 625.5 H1148" stroke="#e3e3e3" stroke-width="1"/><path d="M230 661.5 H1148" stroke="#e3e3e3" stroke-width="1"/><path d="M230 697.5 H1148" stroke="#e3e3e3" stroke-width="1"/><path d="M230 734.5 H1148" stroke="#e3e3e3" stroke-width="1"/><path d="M230 770.5 H1148" stroke="#e3e3e3" stroke-width="1"/><path d="M383.5 625 V806" stroke="#e3e3e3" stroke-width="1"/><path d="M536.5 625 V806" stroke="#e3e3e3" stroke-width="1"/><path d="M689.5 625 V806" stroke="#e3e3e3" stroke-width="1"/><path d="M842.5 625 V806" stroke="#e3e3e3" stroke-width="1"/><path d="M995.5 625 V806" stroke="#e3e3e3" stroke-width="1"/><path d="M1148.5 625 V806" stroke="#e3e3e3" stroke-width="1"/><path d="M230.5 625 V806.5 H1148" stroke="#999" stroke-width="1" fill="none"/><path d="M225 625.5 H230" stroke="#999" stroke-width="1"/><text x="222" y="628.7" text-anchor="end" font-size="12" fill="#555" style="font-family:&quot;Liberation Sans&quot;,sans-serif">10</text><path d="M225 661.5 H230" stroke="#999" stroke-width="1"/><text x="222" y="664.7" text-anchor="end" font-size="12" fill="#555" style="font-family:&quot;Liberation Sans&quot;,sans-serif">8</text><path d="M225 697.5 H230" stroke="#999" stroke-width="1"/><text x="222" y="700.7" text-anchor="end" font-size="12" fill="#555" style="font-family:&quot;Liberation Sans&quot;,sans-serif">6</text><path d="M225 734.5 H230" stroke="#999" stroke-width="1"/><text x="222" y="737.7" text-anchor="end" font-size="12" fill="#555" style="font-family:&quot;Liberation Sans&quot;,sans-serif">4</text><path d="M225 770.5 H230" stroke="#999" stroke-width="1"/><text x="222" y="773.7" text-anchor="end" font-size="12" fill="#555" style="font-family:&quot;Liberation Sans&quot;,sans-serif">2</text><path d="M225 806.5 H230" stroke="#999" stroke-width="1"/><text x="222" y="809.7" text-anchor="end" font-size="12" fill="#555" style="font-family:&quot;Liberation Sans&quot;,sans-serif">0</text><path d="M230.5 806 V811" stroke="#999" stroke-width="1"/><path d="M383.5 806 V811" stroke="#999" stroke-width="1"/><path d="M536.5 806 V811" stroke="#999" stroke-width="1"/><path d="M689.5 806 V811" stroke="#999" stroke-width="1"/><path d="M842.5 806 V811" stroke="#999" stroke-width="1"/><path d="M995.5 806 V811" stroke="#999" stroke-width="1"/><path d="M1148.5 806 V811" stroke="#999" stroke-width="1"/><text x="306.5" y="823" text-anchor="middle" font-size="12" fill="#555" style="font-family:&quot;Liberation Sans&quot;,sans-serif">2020年04月</text><text x="459.5" y="823" text-anchor="middle" font-size="12" fill="#555" style="font-family:&quot;Liberation Sans&quot;,sans-serif">2020年05月</text><text x="612.5" y="823" text-anchor="middle" font-size="12" fill="#555" style="font-family:&quot;Liberation Sans&quot;,sans-serif">2020年07月</text><text x="765.5" y="823" text-anchor="middle" font-size="12" fill="#555" style="font-family:&quot;Liberation Sans&quot;,sans-serif">2020年08月</text><text x="918.5" y="823" text-anchor="middle" font-size="12" fill="#555" style="font-family:&quot;Liberation Sans&quot;,sans-serif">2020年09月</text><text x="1071.5" y="823" text-anchor="middle" font-size="12" fill="#555" style="font-family:&quot;Liberation Sans&quot;,sans-serif">2020年10月</text><polyline points="306.5,751.7 459.5,787.9 612.5,733.6 765.5,625.0 918.5,751.7 1071.5,769.8" fill="none" stroke="#65b9f8" stroke-width="3" stroke-linejoin="round"/><path d="M306.5 806 H1071.5" stroke="#e64f35" stroke-width="3.5"/><circle cx="306.5" cy="751.7" r="4.1" fill="#fff" stroke="#65b9f8" stroke-width="2.7"/><circle cx="459.5" cy="787.9" r="4.1" fill="#fff" stroke="#65b9f8" stroke-width="2.7"/><circle cx="612.5" cy="733.6" r="4.1" fill="#fff" stroke="#65b9f8" stroke-width="2.7"/><circle cx="765.5" cy="625.0" r="4.1" fill="#fff" stroke="#65b9f8" stroke-width="2.7"/><circle cx="918.5" cy="751.7" r="4.1" fill="#fff" stroke="#65b9f8" stroke-width="2.7"/><circle cx="1071.5" cy="769.8" r="4.1" fill="#fff" stroke="#65b9f8" stroke-width="2.7"/><circle cx="306.5" cy="806" r="4.2" fill="#fff" stroke="#e64f35" stroke-width="3"/><circle cx="459.5" cy="806" r="4.2" fill="#fff" stroke="#e64f35" stroke-width="3"/><circle cx="612.5" cy="806" r="4.2" fill="#fff" stroke="#e64f35" stroke-width="3"/><circle cx="765.5" cy="806" r="4.2" fill="#fff" stroke="#e64f35" stroke-width="3"/><circle cx="918.5" cy="806" r="4.2" fill="#fff" stroke="#e64f35" stroke-width="3"/><circle cx="1071.5" cy="806" r="4.2" fill="#fff" stroke="#e64f35" stroke-width="3"/><defs><filter id="sh" x="-100%" y="-100%" width="300%" height="300%"><feGaussianBlur stdDeviation="3"/></filter><filter id="sh2" x="-200%" y="-200%" width="500%" height="500%"><feGaussianBlur stdDeviation="4"/></filter></defs><rect x="752" y="599" width="27" height="22" rx="3" fill="#000" opacity="0.06" filter="url(#sh)"/><rect x="756" y="603" width="19" height="13.7" rx="1.5" fill="#65b9f8"/><path d="M765.5 616.5 V620" stroke="#65b9f8" stroke-width="1"/><path d="M761.2 607.3 L764.3 605.2 V612.8" fill="none" stroke="#fff" stroke-width="2" stroke-linejoin="miter"/><ellipse cx="769.3" cy="609" rx="2.2" ry="3.4" fill="none" stroke="#fff" stroke-width="1.7"/><rect x="449" y="762" width="21" height="22" rx="3" fill="#000" opacity="0.05" filter="url(#sh)"/><rect x="453.6" y="766" width="11.7" height="13.8" rx="1" fill="#65b9f8"/><path d="M459.5 779.5 V783" stroke="#65b9f8" stroke-width="1"/><path d="M456.5 770.3 L459.9 768.1 V776" fill="none" stroke="#fff" stroke-width="2.1" stroke-linejoin="miter"/><ellipse cx="306.5" cy="790" rx="8" ry="10" fill="#000" opacity="0.3" filter="url(#sh2)"/><rect x="304" y="783.7" width="4.8" height="14" fill="#e64f35"/><path d="M306.5 797.5 V802" stroke="#e64f35" stroke-width="1"/><ellipse cx="306.4" cy="790.2" rx="1.6" ry="3.2" fill="none" stroke="#fff" stroke-width="1.4"/><circle cx="1144.2" cy="596.3" r="5" fill="none" stroke="#c4c4c4" stroke-width="1"/><path d="M1144.2 592.8 V597.5 M1144.2 598.6 V599.8" stroke="#c4c4c4" stroke-width="1"/><rect x="1241" y="747.1" width="700" height="24.4" fill="#f4f4f4"/><rect x="1241" y="698.3" width="700" height="24.4" fill="#f4f4f4"/><rect x="1241" y="649.4" width="700" height="24.4" fill="#f4f4f4"/><path d="M1240.5 625 V796.5 H1866" stroke="#999" stroke-width="1" fill="none"/><path d="M1235 625.5 H1240" stroke="#999" stroke-width="1"/><text x="1231" y="628.7" text-anchor="end" font-size="12" fill="#555" style="font-family:&quot;Liberation Sans&quot;,sans-serif">21</text><path d="M1235 649.5 H1240" stroke="#999" stroke-width="1"/><text x="1231" y="652.7" text-anchor="end" font-size="12" fill="#555" style="font-family:&quot;Liberation Sans&quot;,sans-serif">18</text><path d="M1235 674.5 H1240" stroke="#999" stroke-width="1"/><text x="1231" y="677.7" text-anchor="end" font-size="12" fill="#555" style="font-family:&quot;Liberation Sans&quot;,sans-serif">15</text><path d="M1235 698.5 H1240" stroke="#999" stroke-width="1"/><text x="1231" y="701.7" text-anchor="end" font-size="12" fill="#555" style="font-family:&quot;Liberation Sans&quot;,sans-serif">12</text><path d="M1235 723.5 H1240" stroke="#999" stroke-width="1"/><text x="1231" y="726.7" text-anchor="end" font-size="12" fill="#555" style="font-family:&quot;Liberation Sans&quot;,sans-serif">9</text><path d="M1235 747.5 H1240" stroke="#999" stroke-width="1"/><text x="1231" y="750.7" text-anchor="end" font-size="12" fill="#555" style="font-family:&quot;Liberation Sans&quot;,sans-serif">6</text><path d="M1235 772.5 H1240" stroke="#999" stroke-width="1"/><text x="1231" y="775.7" text-anchor="end" font-size="12" fill="#555" style="font-family:&quot;Liberation Sans&quot;,sans-serif">3</text><path d="M1235 796.5 H1240" stroke="#999" stroke-width="1"/><text x="1231" y="799.7" text-anchor="end" font-size="12" fill="#555" style="font-family:&quot;Liberation Sans&quot;,sans-serif">0</text><path d="M1240.5 796 V801" stroke="#999" stroke-width="1"/><path d="M1453.5 796 V801" stroke="#999" stroke-width="1"/><path d="M1666.5 796 V801" stroke="#999" stroke-width="1"/><rect x="1335.0" y="771.6" width="24" height="24.4" fill="#66bbff"/><rect x="1548.0" y="641.3" width="24" height="154.7" fill="#66bbff"/><rect x="1761.0" y="787.9" width="24" height="8.1" fill="#66bbff"/><text x="1346.5" y="812" text-anchor="middle" font-size="12" fill="#555" style="font-family:&quot;Liberation Sans&quot;,sans-serif">天奥集团工程建设项目</text><text x="1559.5" y="812" text-anchor="middle" font-size="12" fill="#555" style="font-family:&quot;Liberation Sans&quot;,sans-serif">新南方建筑项目</text><text x="1772.5" y="812" text-anchor="middle" font-size="12" fill="#555" style="font-family:&quot;Liberation Sans&quot;,sans-serif">远方科技公司办公区装修项目</text><polygon points="1738.9,794.3 1755.5,799.5 1749.4,805.1 1743.2,804.5" fill="#3d7fc1"/><polygon points="1755.5,799.5 1758.6,815.8 1750.0,813.4 1749.4,805.1" fill="#1fa2dc"/><polygon points="1758.6,815.8 1747.5,827.8 1745.7,818.0 1750.0,813.4" fill="#3d7fc1"/><polygon points="1747.5,827.8 1731.2,823.5 1738.9,816.5 1745.7,818.0" fill="#1fa2dc"/><polygon points="1727.2,804.2 1743.5,808.2 1736.5,815.5 1729.1,814.0" fill="#a0b03b"/><polygon points="1727.2,804.2 1729.1,814.0 1724.8,818.9 1716.2,815.8" fill="#c9d52b"/><polygon points="1716.2,815.8 1724.8,818.9 1726.3,825.7 1719.5,832.8" fill="#a0b03b"/><polygon points="1719.5,832.8 1726.3,825.7 1733.4,827.2 1735.8,837.4" fill="#c9d52b"/><text x="1760" y="819.5" font-size="23" letter-spacing="2.6" fill="#1ba0df" stroke="#1ba0df" stroke-width="0.8" style="font-family:&quot;Liberation Sans&quot;,sans-serif">汇高软件</text><text x="1761" y="835" font-size="11" font-weight="bold" fill="#555" style="font-family:&quot;Liberation Sans&quot;,sans-serif" letter-spacing="0.6">软件是根</text><text x="1816" y="835" font-size="11" font-weight="bold" fill="#555" style="font-family:&quot;Liberation Sans&quot;,sans-serif" letter-spacing="0.6">服务为本</text></svg>
</body></html>
